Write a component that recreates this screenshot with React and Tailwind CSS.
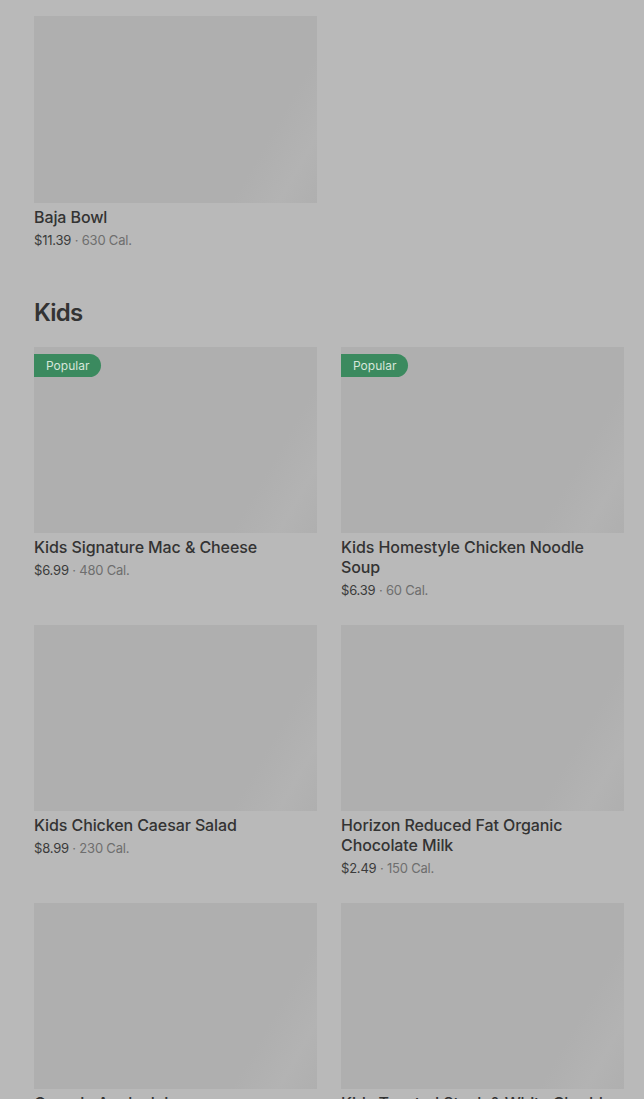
import React from "react";

const kids = [
  { name: "Kids Signature Mac & Cheese", price: "$6.99", cal: "480 Cal.", popular: true },
  { name: "Kids Homestyle Chicken Noodle Soup", price: "$6.39", cal: "60 Cal.", popular: true },
  { name: "Kids Chicken Caesar Salad", price: "$8.99", cal: "230 Cal." },
  { name: "Horizon Reduced Fat Organic Chocolate Milk", price: "$2.49", cal: "150 Cal." },
  { name: "Organic Apple Juice", price: "$2.79", cal: "120 Cal." },
  { name: "Kids Toasted Steak & White Cheddar", price: "$7.49", cal: "400 Cal." },
];

function ItemCard({ item, tall }) {
  return (
    <div className="flex flex-col">
      <div
        className={
          (tall ? "h-[187px] " : "h-[186px] ") +
          "relative w-full bg-[linear-gradient(120deg,#afafaf_0%,#afafaf_78%,#b3b3b3_90%,#afafaf_100%)]"
        }
      >
        {item.popular && (
          <span className="absolute left-0 top-[7px] flex h-[23px] items-center rounded-r-full bg-[#3b8a5f] pl-3 pr-3 text-[12px] text-[#d6e6da]">
            Popular
          </span>
        )}
      </div>
      <div className="mt-1 text-[16px] font-medium leading-5 tracking-[-0.1px] text-[#333333]">{item.name}</div>
      <div className="mt-1 text-[13px] leading-[18px] tracking-[-0.2px] text-[#3b3b3b]">
        {item.price}
        <span className="text-[#6e6e6e]"> · {item.cal}</span>
      </div>
    </div>
  );
}

export default function App() {
  return (
    <div className="min-h-[1099px] overflow-hidden bg-[#b9b9b9] pl-[34px] pr-[20px] pt-4 font-['Inter',sans-serif]">
      <div className="grid grid-cols-2 gap-x-6">
        <ItemCard tall item={{ name: "Baja Bowl", price: "$11.39", cal: "630 Cal." }} />
      </div>

      <h2 className="mt-[48px] mb-[18px] text-[24px] font-semibold leading-8 tracking-[-0.8px] text-[#333333]">Kids</h2>

      <div className="grid grid-cols-2 gap-x-6 gap-y-[26px]">
        {kids.map((item) => (
          <ItemCard key={item.name} item={item} />
        ))}
      </div>
    </div>
  );
}
